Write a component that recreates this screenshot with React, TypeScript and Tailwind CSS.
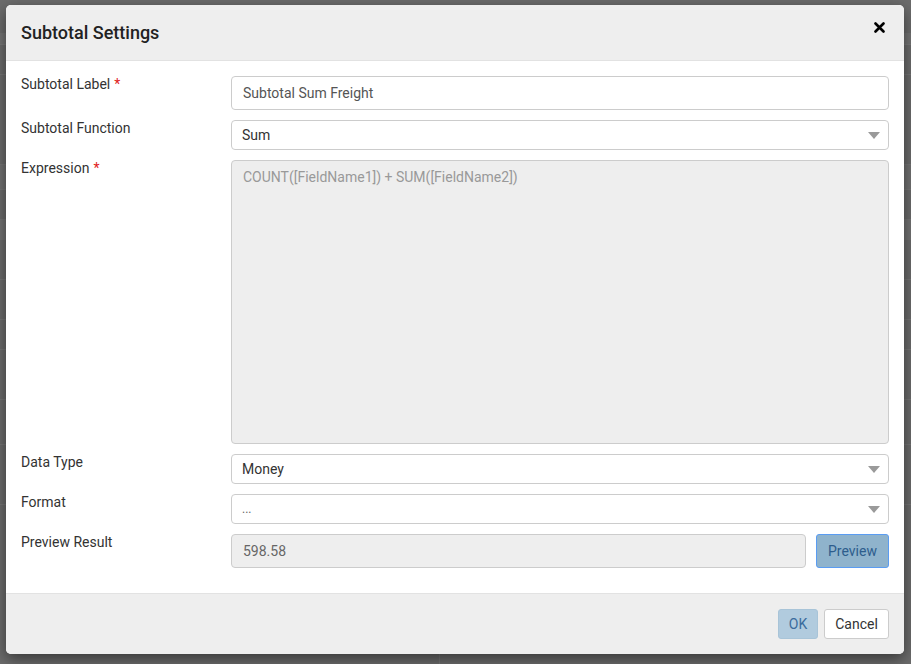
import React from "react";

const font = { fontFamily: "Roboto, 'Liberation Sans', sans-serif" };

function Caret() {
  return (
    <svg width="12" height="7" viewBox="0 0 12 7" className="shrink-0">
      <path d="M0 0 L12 0 L6 7 Z" fill="#9a9a9a" />
    </svg>
  );
}

function Label({ text, req }: { text: string; req?: boolean }) {
  return (
    <div className="text-[14px] leading-[16px] text-[#333]">
      {text}
      {req && <span className="text-[#e02020] ml-[4px]">*</span>}
    </div>
  );
}

function Select({ value, muted }: { value: string; muted?: boolean }) {
  return (
    <div className="h-[30px] border border-[#ccc] rounded-[4px] bg-white flex items-center justify-between pl-[10px] pr-[8px]">
      <span className={muted ? "text-[12px] text-[#666]" : "text-[14px] text-[#333]"}>{value}</span>
      <Caret />
    </div>
  );
}

export default function App() {
  return (
    <div className="relative w-[911px] h-[664px] overflow-hidden bg-[#6c6c6c]" style={font}>
      {/* dimmed page behind */}
      <div className="absolute inset-0 flex flex-col">
        <div className="h-[33px]" />
        <div className="h-[12px] bg-[#747474] border-b border-[#7a7a7a]" />
        <div className="h-[30px] border-b border-[#777]" />
        <div className="h-[90px] border-b border-[#777]" />
        <div className="h-[25px] bg-[#727272] border-b border-[#777]" />
        <div className="h-[30px] border-b border-[#777]" />
        <div className="h-[20px] bg-[#737373]" />
        <div className="h-[40px] border-b border-[#777]" />
        <div className="h-[40px] border-b border-[#777]" />
        <div className="h-[30px] border-b border-[#777]" />
        <div className="h-[50px] border-b border-[#777]" />
        <div className="h-[45px] border-b border-[#777]" />
        <div className="h-[60px] border-b border-[#777]" />
        <div className="flex-1 flex">
          <div className="w-[440px] border-r border-[#777]" />
        </div>
      </div>

      {/* modal */}
      <div className="absolute left-[6px] top-[5px] w-[898px] h-[649px] bg-white rounded-[5px] overflow-hidden flex flex-col shadow-[0_5px_15px_rgba(0,0,0,0.5)]">
        <div className="h-[56px] shrink-0 bg-[#eeeeee] border-b border-[#e2e2e2] flex items-center justify-between pl-[15px] pr-[19px]">
          <div className="text-[18px] font-medium text-[#222] -mt-[1px]">Subtotal Settings</div>
          <svg width="11" height="11" viewBox="0 0 11 11" className="-mt-[10px]">
            <path d="M1.5 1.5 L9.5 9.5 M9.5 1.5 L1.5 9.5" stroke="#000" strokeWidth="2.6" strokeLinecap="round" />
          </svg>
        </div>

        <div className="flex-1 pt-[15px] pl-[15px] pr-[15px] flex flex-col gap-[10px]">
          <div className="grid grid-cols-[210px_1fr] items-start">
            <Label text="Subtotal Label" req />
            <div className="h-[34px] border border-[#ccc] rounded-[4px] flex items-center pl-[11px] text-[14px] text-[#555]">
              Subtotal Sum Freight
            </div>
          </div>
          <div className="grid grid-cols-[210px_1fr] items-start">
            <Label text="Subtotal Function" />
            <Select value="Sum" />
          </div>
          <div className="grid grid-cols-[210px_1fr] items-start">
            <Label text="Expression" req />
            <div className="h-[284px] border border-[#ccc] rounded-[4px] bg-[#eeeeee] pl-[11px] pt-[6px] text-[14px] text-[#999]">
              COUNT([FieldName1]) + SUM([FieldName2])
            </div>
          </div>
          <div className="grid grid-cols-[210px_1fr] items-start">
            <Label text="Data Type" />
            <Select value="Money" />
          </div>
          <div className="grid grid-cols-[210px_1fr] items-start">
            <Label text="Format" />
            <Select value="..." muted />
          </div>
          <div className="grid grid-cols-[210px_1fr] items-start">
            <Label text="Preview Result" />
            <div className="flex gap-[10px] items-start">
              <div className="flex-1 h-[34px] border border-[#ccc] rounded-[4px] bg-[#eeeeee] flex items-center pl-[11px] text-[14px] text-[#666]">
                598.58
              </div>
              <div className="w-[73px] h-[34px] rounded-[3px] border border-[#5a9cf2] bg-[#8fb3cc] flex items-center justify-center text-[14px] text-[#2d5d8c]">
                Preview
              </div>
            </div>
          </div>
        </div>

        <div className="h-[61px] shrink-0 bg-[#eeeeee] border-t border-[#e2e2e2] flex items-start justify-end gap-[6px] pt-[15px] pr-[15px]">
          <div className="w-[40px] h-[30px] rounded-[3px] border border-[#a8c4d8] bg-[#b1cbde] flex items-center justify-center text-[14px] text-[#3b6c9c]">
            OK
          </div>
          <div className="w-[65px] h-[30px] rounded-[3px] border border-[#ccc] bg-white flex items-center justify-center text-[14px] text-[#333]">
            Cancel
          </div>
        </div>
      </div>
    </div>
  );
}
